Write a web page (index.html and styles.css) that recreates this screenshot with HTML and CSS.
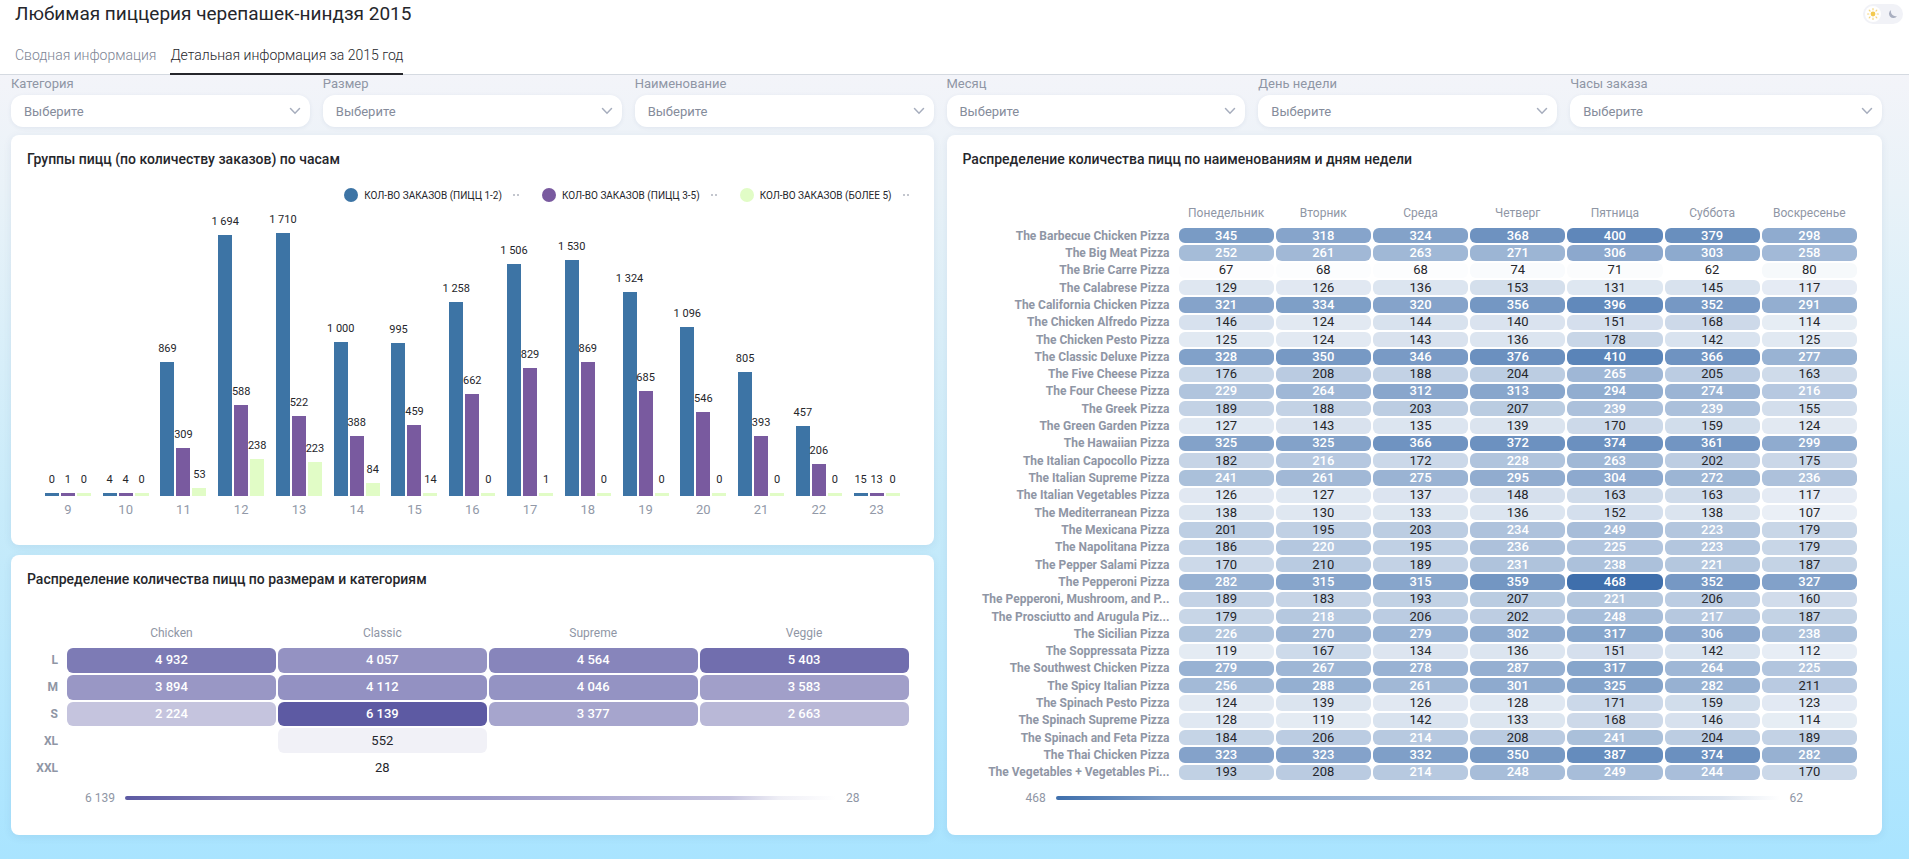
FILE: index.html
```
<!DOCTYPE html>
<html lang="ru">
<head>
    <meta charset="UTF-8">
    <title>Любимая пиццерия черепашек-ниндзя 2015</title>
    <link rel="stylesheet" href="styles.css">
</head>
<body>
    <header class="header">
        <div class="header-top">
            <h1>Любимая пиццерия черепашек-ниндзя 2015</h1>
            <label class="theme">
                <input type="checkbox" class="theme-input" aria-label="Тёмная тема">
                <span class="theme-knob">
                    <svg width="12" height="12" viewBox="0 0 12 12">
                        <circle cx="6" cy="6" r="2.4" fill="#f3c94f"/>
                        <path d="M6 .6v1.2M6 10.2v1.2M.6 6h1.2M10.2 6h1.2M2.2 2.2l.8.8M9 9l.8.8M2.2 9.8l.8-.8M9 3l.8-.8" stroke="#f5d67c" stroke-width="1.2" stroke-linecap="round"/>
                    </svg>
                </span>
                <span class="theme-moon">
                    <svg width="10" height="10" viewBox="0 0 10 10">
                        <path d="M3.2 1A4.3 4.3 0 1 0 9 6.9 4.6 4.6 0 0 1 3.2 1z" fill="#a9afc0"/>
                    </svg>
                </span>
            </label>
        </div>
        <nav class="tabs">
            <a href="#" class="tab">Сводная информация</a>
            <a href="#" class="tab active">Детальная информация за 2015 год</a>
        </nav>
    </header>

    <main class="board">
        <div class="filters" id="filters"></div>

        <section class="card card-hours">
            <h2>Группы пицц (по количеству заказов) по часам</h2>
            <div class="legend">
                <span class="legend-item"><i class="dot blue"></i>Кол-во заказов (пицц 1-2)<i class="more"></i></span>
                <span class="legend-item"><i class="dot purple"></i>Кол-во заказов (пицц 3-5)<i class="more"></i></span>
                <span class="legend-item"><i class="dot green"></i>Кол-во заказов (более 5)<i class="more"></i></span>
            </div>
            <div class="chart" id="chart"></div>
        </section>

        <section class="card card-sizes">
            <h2>Распределение количества пицц по размерам и категориям</h2>
            <div class="heat-wrap">
                <table class="heat heat-sizes" id="sizes"></table>
            </div>
            <div class="scale scale-sizes"><span>6 139</span><i class="scale-bar"></i><span>28</span></div>
        </section>

        <section class="card card-names">
            <h2>Распределение количества пицц по наименованиям и дням недели</h2>
            <div class="heat-wrap">
                <table class="heat heat-names" id="names"></table>
            </div>
            <div class="scale scale-names"><span>468</span><i class="scale-bar"></i><span>62</span></div>
        </section>
    </main>

    <script>
        const filters = ['Категория', 'Размер', 'Наименование', 'Месяц', 'День недели', 'Часы заказа'];

        // hour, 1-2 pizzas, 3-5 pizzas, more than 5
        const hours = [
            [9, 0, 1, 0], [10, 4, 4, 0], [11, 869, 309, 53], [12, 1694, 588, 238],
            [13, 1710, 522, 223], [14, 1000, 388, 84], [15, 995, 459, 14], [16, 1258, 662, 0],
            [17, 1506, 829, 1], [18, 1530, 869, 0], [19, 1324, 685, 0], [20, 1096, 546, 0],
            [21, 805, 393, 0], [22, 457, 206, 0], [23, 15, 13, 0]
        ];

        const categories = ['Chicken', 'Classic', 'Supreme', 'Veggie'];
        const sizes = [
            ['L', 4932, 4057, 4564, 5403],
            ['M', 3894, 4112, 4046, 3583],
            ['S', 2224, 6139, 3377, 2663],
            ['XL', null, 552, null, null],
            ['XXL', null, 28, null, null]
        ];

        const days = ['Понедельник', 'Вторник', 'Среда', 'Четверг', 'Пятница', 'Суббота', 'Воскресенье'];
        const names = [
            ['The Barbecue Chicken Pizza', 345, 318, 324, 368, 400, 379, 298],
            ['The Big Meat Pizza', 252, 261, 263, 271, 306, 303, 258],
            ['The Brie Carre Pizza', 67, 68, 68, 74, 71, 62, 80],
            ['The Calabrese Pizza', 129, 126, 136, 153, 131, 145, 117],
            ['The California Chicken Pizza', 321, 334, 320, 356, 396, 352, 291],
            ['The Chicken Alfredo Pizza', 146, 124, 144, 140, 151, 168, 114],
            ['The Chicken Pesto Pizza', 125, 124, 143, 136, 178, 142, 125],
            ['The Classic Deluxe Pizza', 328, 350, 346, 376, 410, 366, 277],
            ['The Five Cheese Pizza', 176, 208, 188, 204, 265, 205, 163],
            ['The Four Cheese Pizza', 229, 264, 312, 313, 294, 274, 216],
            ['The Greek Pizza', 189, 188, 203, 207, 239, 239, 155],
            ['The Green Garden Pizza', 127, 143, 135, 139, 170, 159, 124],
            ['The Hawaiian Pizza', 325, 325, 366, 372, 374, 361, 299],
            ['The Italian Capocollo Pizza', 182, 216, 172, 228, 263, 202, 175],
            ['The Italian Supreme Pizza', 241, 261, 275, 295, 304, 272, 236],
            ['The Italian Vegetables Pizza', 126, 127, 137, 148, 163, 163, 117],
            ['The Mediterranean Pizza', 138, 130, 133, 136, 152, 138, 107],
            ['The Mexicana Pizza', 201, 195, 203, 234, 249, 223, 179],
            ['The Napolitana Pizza', 186, 220, 195, 236, 225, 223, 179],
            ['The Pepper Salami Pizza', 170, 210, 189, 231, 238, 221, 187],
            ['The Pepperoni Pizza', 282, 315, 315, 359, 468, 352, 327],
            ['The Pepperoni, Mushroom, and P...', 189, 183, 193, 207, 221, 206, 160],
            ['The Prosciutto and Arugula Piz...', 179, 218, 206, 202, 248, 217, 187],
            ['The Sicilian Pizza', 226, 270, 279, 302, 317, 306, 238],
            ['The Soppressata Pizza', 119, 167, 134, 136, 151, 142, 112],
            ['The Southwest Chicken Pizza', 279, 267, 278, 287, 317, 264, 225],
            ['The Spicy Italian Pizza', 256, 288, 261, 301, 325, 282, 211],
            ['The Spinach Pesto Pizza', 124, 139, 126, 128, 171, 159, 123],
            ['The Spinach Supreme Pizza', 128, 119, 142, 133, 168, 146, 114],
            ['The Spinach and Feta Pizza', 184, 206, 214, 208, 241, 204, 189],
            ['The Thai Chicken Pizza', 323, 323, 332, 350, 387, 374, 282],
            ['The Vegetables + Vegetables Pi...', 193, 208, 214, 248, 249, 244, 170]
        ];

        function format(n) {
            return String(n).replace(/(\d)(\d{3})$/, '$1 $2');
        }

        function renderFilters() {
            document.getElementById('filters').innerHTML = filters.map((name, i) => `
                <div class="filter">
                    <label for="filter-${i}">${name}</label>
                    <div class="select">
                        <select id="filter-${i}"><option>Выберите</option></select>
                        <svg width="12" height="8" viewBox="0 0 12 8"><path d="M1.5 1.5L6 6.2l4.5-4.7" fill="none" stroke="#a6adbd" stroke-width="1.5" stroke-linecap="round"/></svg>
                    </div>
                </div>`).join('');
        }

        function renderChart() {
            const max = 1825;
            const colors = ['blue', 'purple', 'green'];
            document.getElementById('chart').innerHTML = hours.map(([hour, ...values]) => `
                <div class="group">
                    <div class="bars">
                        ${values.map((v, i) => `<div class="bar ${colors[i]}" style="height: ${(v / max * 100).toFixed(2)}%"><span>${format(v)}</span></div>`).join('')}
                    </div>
                    <div class="hour">${hour}</div>
                </div>`).join('');
        }

        // cells go from white at the minimum to the full color at the maximum
        function renderHeat(id, columns, rows, min, max, color, lightFrom) {
            const cell = v => {
                if (v === null) return '<td></td>';
                const t = (v - min) / (max - min);
                const rgb = color.map(c => Math.round(255 - (255 - c) * t));
                return `<td class="${v >= lightFrom ? 'light' : ''}" style="background: rgb(${rgb})">${format(v)}</td>`;
            };
            document.getElementById(id).innerHTML =
                '<thead><tr><th></th>' + columns.map(c => `<th scope="col">${c}</th>`).join('') + '</tr></thead>' +
                '<tbody>' + rows.map(([name, ...values]) => `<tr><th scope="row">${name}</th>${values.map(cell).join('')}</tr>`).join('') + '</tbody>';
        }

        renderFilters();
        renderChart();
        renderHeat('sizes', categories, sizes, 28, 6139, [93, 90, 163], 2000);
        renderHeat('names', days, names, 62, 468, [63, 111, 172], 214);
    </script>
</body>
</html>
```
FILE: styles.css
```
* {
    box-sizing: border-box;
}
body {
    margin: 0;
    min-height: 100vh;
    display: flex;
    flex-direction: column;
    font-family: Roboto, "Liberation Sans", sans-serif;
    font-size: 13px;
    color: #25262b;
    background: #fff;
}
h1, h2 {
    margin: 0;
}
.header {
    border-bottom: 1px solid #d5dae1;
}
.header-top {
    display: flex;
    justify-content: space-between;
    align-items: center;
    height: 28px;
    padding: 0 6px 0 15px;
}
h1 {
    font-size: 19px;
    line-height: 28px;
    font-weight: 400;
}
.theme {
    display: flex;
    align-items: center;
    width: 40px;
    height: 20px;
    padding: 2px;
    border-radius: 10px;
    background: #f1f2f7;
    cursor: pointer;
}
.theme-input {
    position: absolute;
    opacity: 0;
}
.theme-knob {
    display: flex;
    align-items: center;
    justify-content: center;
    width: 16px;
    height: 16px;
    border-radius: 50%;
    background: #fff;
}
.theme-moon {
    display: flex;
    margin-left: 7px;
}
.tabs {
    display: flex;
    gap: 14px;
    padding: 9px 15px 0;
    margin-bottom: -1px;
}
.tab {
    height: 38px;
    line-height: 36px;
    font-size: 14px;
    font-weight: 300;
    color: #7d8494;
    text-decoration: none;
    border-bottom: 2px solid transparent;
}
.tab.active {
    color: #25262b;
    border-color: #25262b;
}

.board {
    flex: 1;
    display: grid;
    grid-template-columns: 1fr 1fr;
    grid-template-rows: auto 3fr 2fr;
    padding: 0 27px 24px 11px;
    background: linear-gradient(#f3f4f9, #e9f2f8 15%, #c8ebfa 55%, #a9e4ff);
}
.filters {
    grid-column: 1 / 3;
    display: grid;
    grid-template-columns: repeat(6, 1fr);
    margin-bottom: 8px;
}
.filter {
    margin-right: 13px;
}
.filter:last-child {
    margin-right: 0;
}
.filter label {
    display: block;
    line-height: 18px;
    margin-bottom: 2px;
    color: #8f96a5;
}
.select {
    display: grid;
    align-items: center;
}
.select select,
.select svg {
    grid-area: 1 / 1;
}
.select select {
    appearance: none;
    width: 100%;
    height: 32px;
    padding: 0 32px 0 13px;
    border: none;
    border-radius: 12px;
    background: #fff;
    font-family: inherit;
    font-size: 13px;
    color: #858c9b;
    box-shadow: 0 1px 4px rgba(40, 70, 110, 0.08);
}
.select svg {
    justify-self: end;
    margin-right: 9px;
    pointer-events: none;
}

.card {
    display: flex;
    flex-direction: column;
    min-height: 0;
    padding: 12px 23px 27px 16px;
    background: #fff;
    border-radius: 8px;
    box-shadow: 0 2px 8px rgba(40, 70, 110, 0.08);
}
.card h2 {
    font-size: 14px;
    line-height: 24px;
    font-weight: 500;
}
.card-hours {
    grid-area: 2 / 1;
    margin: 0 13px 10px 0;
}
.card-sizes {
    grid-area: 3 / 1;
    margin-right: 13px;
}
.card-names {
    grid-area: 2 / 2 / 4;
}

.blue { background: #3d74a5; }
.purple { background: #795a9f; }
.green { background: #e1fcc6; }

.legend {
    display: flex;
    justify-content: flex-end;
    gap: 23px;
    margin: 14px 2px 10px 0;
}
.legend-item {
    display: flex;
    align-items: center;
    height: 20px;
    font-size: 10px;
    text-transform: uppercase;
}
.dot {
    width: 14px;
    height: 14px;
    margin-right: 6px;
    border-radius: 50%;
}
.more {
    width: 6px;
    height: 2px;
    margin-left: 11px;
    background: linear-gradient(90deg, #c3c6ce 2px, transparent 2px 4px, #c3c6ce 4px);
}
.chart {
    flex: 1;
    display: grid;
    grid-template-columns: repeat(15, 1fr);
    padding: 0 5px 0 12px;
    margin-bottom: -6px;
}
.group {
    display: flex;
    flex-direction: column;
}
.bars {
    flex: 1;
    display: flex;
    justify-content: center;
    align-items: flex-end;
    gap: 2px;
}
.bar {
    display: flex;
    justify-content: center;
    width: 14px;
    min-height: 3px;
}
.bar span {
    margin-top: -19px;
    font-size: 11px;
    line-height: 12px;
    white-space: nowrap;
}
.hour {
    height: 28px;
    line-height: 28px;
    text-align: center;
    color: #9299a8;
}

.heat-wrap {
    flex: 1;
    min-height: 0;
    margin-top: 26px;
}
.heat {
    width: 100%;
    height: 100%;
    table-layout: fixed;
    border-spacing: 2px;
}
.heat th {
    padding: 0;
    font-size: 12px;
    line-height: 14px;
    color: #8f96a5;
    white-space: nowrap;
}
.heat thead th {
    height: 27px;
    font-weight: 400;
}
.heat tbody th {
    padding-right: 7px;
    text-align: right;
    font-weight: 700;
}
.heat td {
    padding: 0;
    line-height: 14px;
    text-align: center;
    border-radius: 6px;
}
.heat td.light {
    color: #fff;
    font-weight: 500;
}
.heat-sizes th:first-child {
    width: 36px;
}
.heat-names th:first-child {
    width: 212px;
}
.scale {
    display: flex;
    align-items: center;
    gap: 10px;
    height: 20px;
    margin-top: 6px;
    font-size: 12px;
    color: #8f96a5;
}
.scale-bar {
    flex: 1;
    height: 4px;
    border-radius: 2px;
}
.scale-sizes {
    padding: 0 51px 0 58px;
}
.scale-sizes .scale-bar {
    background: linear-gradient(90deg, #5d5aa3, #7f7bb4 15%, #9b98c8 50%, #c6c4df 85%, #efeff6 92%, #fff);
}
.scale-names {
    padding: 0 56px 0 63px;
}
.scale-names .scale-bar {
    background: linear-gradient(90deg, #3f6fac, #7c9cc7 15%, #b0c3de 58%, #dfe6f0 92%, #fff);
}
```
